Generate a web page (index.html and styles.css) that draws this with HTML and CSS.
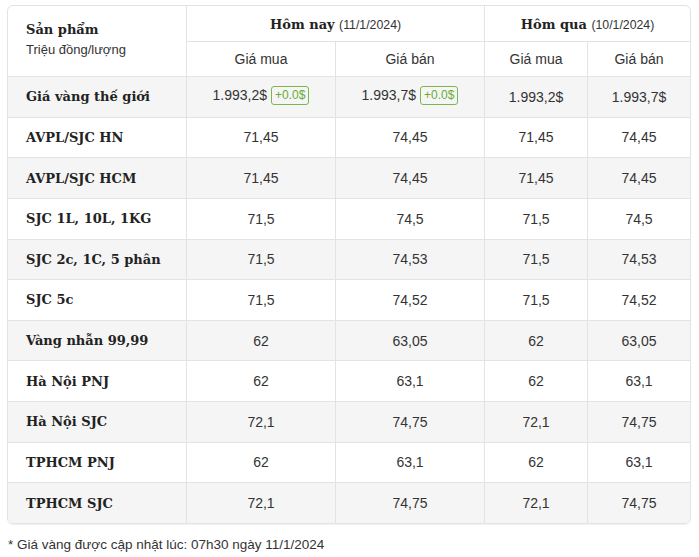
FILE: index.html
```html
<!DOCTYPE html>
<html lang="vi">
<head>
<meta charset="utf-8">
<link rel="stylesheet" href="styles.css">
</head>
<body>
<div class="wrap">
  <table class="price">
    <colgroup>
      <col class="c1"><col class="c2"><col class="c3"><col class="c4"><col class="c5">
    </colgroup>
    <thead>
      <tr class="h1">
        <th rowspan="2" class="prod-h">
          <div class="ph-title">Sản phẩm</div>
          <div class="ph-unit">Triệu đồng/lượng</div>
        </th>
        <th colspan="2" class="day"><b>Hôm nay</b> <span>(11/1/2024)</span></th>
        <th colspan="2" class="day last"><b>Hôm qua</b> <span>(10/1/2024)</span></th>
      </tr>
      <tr class="h2">
        <th class="sub">Giá mua</th>
        <th class="sub">Giá bán</th>
        <th class="sub">Giá mua</th>
        <th class="sub last">Giá bán</th>
      </tr>
    </thead>
    <tbody>
      <tr><td class="name">Giá vàng thế giới</td><td>1.993,2$<span class="badge">+0.0$</span></td><td>1.993,7$<span class="badge">+0.0$</span></td><td>1.993,2$</td><td class="last">1.993,7$</td></tr>
      <tr><td class="name">AVPL/SJC HN</td><td>71,45</td><td>74,45</td><td>71,45</td><td class="last">74,45</td></tr>
      <tr><td class="name">AVPL/SJC HCM</td><td>71,45</td><td>74,45</td><td>71,45</td><td class="last">74,45</td></tr>
      <tr><td class="name">SJC 1L, 10L, 1KG</td><td>71,5</td><td>74,5</td><td>71,5</td><td class="last">74,5</td></tr>
      <tr><td class="name">SJC 2c, 1C, 5 phân</td><td>71,5</td><td>74,53</td><td>71,5</td><td class="last">74,53</td></tr>
      <tr><td class="name">SJC 5c</td><td>71,5</td><td>74,52</td><td>71,5</td><td class="last">74,52</td></tr>
      <tr><td class="name">Vàng nhẫn 99,99</td><td>62</td><td>63,05</td><td>62</td><td class="last">63,05</td></tr>
      <tr><td class="name">Hà Nội PNJ</td><td>62</td><td>63,1</td><td>62</td><td class="last">63,1</td></tr>
      <tr><td class="name">Hà Nội SJC</td><td>72,1</td><td>74,75</td><td>72,1</td><td class="last">74,75</td></tr>
      <tr><td class="name">TPHCM PNJ</td><td>62</td><td>63,1</td><td>62</td><td class="last">63,1</td></tr>
      <tr class="final"><td class="name">TPHCM SJC</td><td>72,1</td><td>74,75</td><td>72,1</td><td class="last">74,75</td></tr>
    </tbody>
  </table>
</div>
<p class="note">* Giá vàng được cập nhật lúc: 07h30 ngày 11/1/2024</p>
</body>
</html>
```
FILE: styles.css
```css
html, body {
  margin: 0;
  padding: 0;
  background: #fff;
}
body {
  padding: 5px 8px 0 7px;
  font-family: "Liberation Sans", Arial, sans-serif;
  color: #333;
}
.wrap {
  width: 682px;
  border: 1px solid #e3e3e3;
  border-radius: 6px;
  overflow: hidden;
  box-shadow: 0 1px 1px rgba(0,0,0,0.06);
}
.price {
  width: 100%;
  border-collapse: separate;
  border-spacing: 0;
  table-layout: fixed;
}
.c1 { width: 179px; }
.c2 { width: 149px; }
.c3 { width: 149px; }
.c4 { width: 103px; }
.c5 { width: 102px; }
th, td {
  border-right: 1px solid #e3e3e3;
  border-bottom: 1px solid #e3e3e3;
  padding: 0;
  text-align: center;
  font-weight: normal;
}
th.last, td.last { border-right: none; }
tr.final td { border-bottom: none; }
.prod-h {
  text-align: left;
  vertical-align: top;
  padding: 15px 18px 0 18px;
}
.ph-title {
  font-family: "DejaVu Serif", Georgia, serif;
  font-weight: bold;
  font-size: 13px;
  line-height: 18px;
  color: #222;
}
.ph-unit {
  margin-top: 3px;
  font-size: 13px;
  line-height: 16px;
  color: #333;
}
.h1 th { height: 35px; }
.h2 th { height: 34px; }
.day b {
  font-family: "DejaVu Serif", Georgia, serif;
  font-weight: bold;
  font-size: 13px;
  color: #222;
}
.day span {
  font-size: 12.3px;
  color: #333;
}
.sub {
  font-size: 14px;
  color: #333;
}
tbody td {
  height: 39.64px;
  font-size: 14px;
  color: #333;
}
tbody tr:nth-child(odd) td { background: #f5f5f5; }
td.name {
  text-align: left;
  padding-left: 18px;
  font-family: "DejaVu Serif", Georgia, serif;
  font-weight: bold;
  font-size: 13px;
  color: #222;
}
.badge {
  display: inline-block;
  margin-left: 4px;
  padding: 0 3px;
  height: 17px;
  line-height: 17px;
  border: 1px solid #7cb74a;
  border-radius: 3px;
  color: #6aab35;
  font-size: 12px;
  vertical-align: middle;
  position: relative;
  top: -1px;
}
.note {
  margin: 13px 0 0 1px;
  font-size: 13.5px;
  color: #333;
}
```
